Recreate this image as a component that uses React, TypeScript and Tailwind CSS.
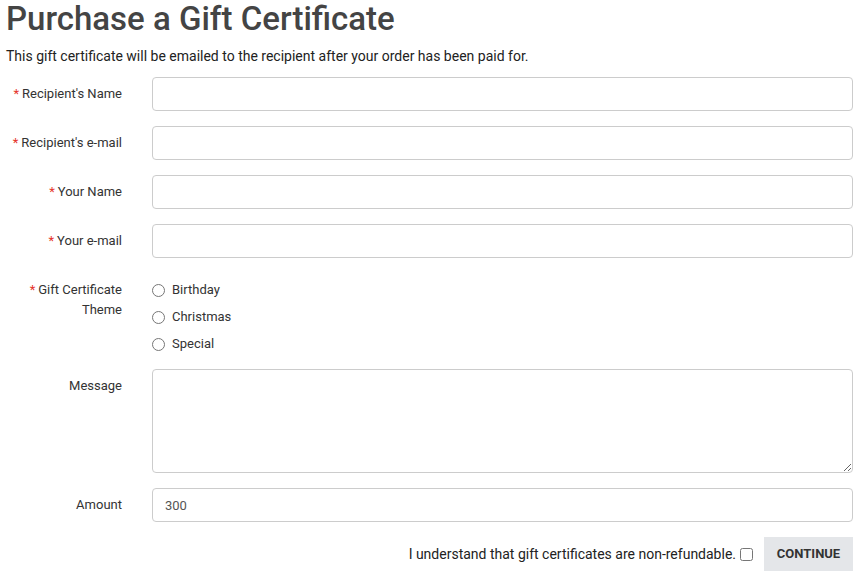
import { useState } from 'react'

const font = { fontFamily: 'Roboto, "Liberation Sans", sans-serif' }

function Label({ text, required }: { text: React.ReactNode; required?: boolean }) {
  return (
    <label className="w-[116px] shrink-0 pt-[7px] text-right text-[13px] leading-5 text-[#333]">
      {required && <span className="mr-[3px] text-[#e5342a]">*</span>}
      {text}
    </label>
  )
}

function TextRow({ label, required, value }: { label: string; required?: boolean; value?: string }) {
  return (
    <div className="flex gap-[30px]">
      <Label text={label} required={required} />
      <input
        type="text"
        defaultValue={value}
        className="h-[34px] flex-1 rounded-[4px] border border-[#cccccc] bg-white px-3 text-[13px] text-[#555] outline-none"
      />
    </div>
  )
}

export default function App() {
  const [theme, setTheme] = useState('')
  return (
    <div style={font} className="bg-white pl-[6px] pr-[11px] text-[#333]">
      <h1 className="-mt-px text-[33px] font-medium leading-[39px] text-[#444]">Purchase a Gift Certificate</h1>
      <p className="mt-[8px] text-[14px] leading-5 text-[#222]">
        This gift certificate will be emailed to the recipient after your order has been paid for.
      </p>
      <form className="mt-[11px] flex flex-col gap-[15px]">
        <TextRow label="Recipient's Name" required />
        <TextRow label="Recipient's e-mail" required />
        <TextRow label="Your Name" required />
        <TextRow label="Your e-mail" required />
        <div className="flex gap-[30px]">
          <Label
            required
            text={
              <>
                Gift Certificate
                <br />
                Theme
              </>
            }
          />
          <div className="flex flex-col gap-[7px] pt-[7px]">
            {['Birthday', 'Christmas', 'Special'].map((t) => (
              <label key={t} className="flex items-center gap-[7px] text-[13px] leading-5 text-[#333]">
                <input
                  type="radio"
                  name="theme"
                  checked={theme === t}
                  onChange={() => setTheme(t)}
                  className="m-0 h-[13px] w-[13px]"
                />
                {t}
              </label>
            ))}
          </div>
        </div>
        <div className="flex gap-[30px]">
          <Label text="Message" />
          <textarea className="block h-[104px] flex-1 rounded-[4px] border border-[#cccccc] bg-white px-3 py-2 text-[13px] outline-none" />
        </div>
        <TextRow label="Amount" value="300" />
        <div className="flex items-center justify-end">
          <span className="text-[14px] text-[#222]">I understand that gift certificates are non-refundable.</span>
          <input type="checkbox" className="ml-[4px] h-[13px] w-[13px]" />
          <button
            type="button"
            className="ml-[11px] h-[34px] w-[89px] bg-[#e4e6e9] text-[13px] font-bold text-[#333]"
          >
            CONTINUE
          </button>
        </div>
      </form>
    </div>
  )
}
